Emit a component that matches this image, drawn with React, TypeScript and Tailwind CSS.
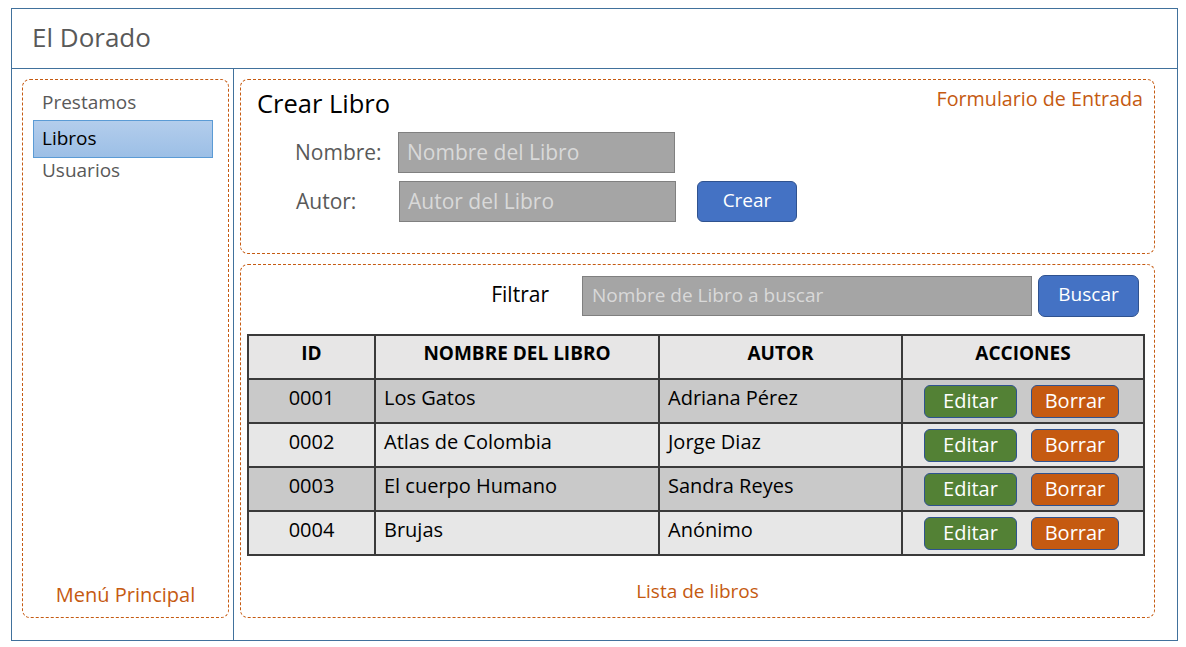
import React from "react";

type Libro = {
  id: string;
  nombre: string;
  autor: string;
};

const libros: Libro[] = [
  { id: "0001", nombre: "Los Gatos", autor: "Adriana Pérez" },
  { id: "0002", nombre: "Atlas de Colombia", autor: "Jorge Diaz" },
  { id: "0003", nombre: "El cuerpo Humano", autor: "Sandra Reyes" },
  { id: "0004", nombre: "Brujas", autor: "Anónimo" },
];

const font = { fontFamily: '"Open Sans", "Noto Sans", sans-serif' };

const Sidebar = () => {
  return (
    <div className="w-[222px] shrink-0 border-r border-[#41719c] pl-[10px] pt-[10px]">
      <div className="flex h-[539px] w-[207px] flex-col rounded-[8px] border border-dashed border-[#c55a11] pt-[7px]">
        <div className="pl-[19px] text-[19px] leading-[30px] text-[#595959]">Prestamos</div>
        <div className="ml-[10px] mt-[3px] h-[38px] w-[180px] border border-[#5b9bd5] bg-gradient-to-b from-[#b3cdec] to-[#9cbfe6] pl-[8px] text-[19px] leading-[34px] text-black">
          Libros
        </div>
        <div className="pl-[19px] text-[19px] leading-[24px] text-[#595959]">Usuarios</div>
        <div className="mt-auto pb-[8px] text-center text-[20px] leading-[28px] text-[#c55a11]">
          Menú Principal
        </div>
      </div>
    </div>
  );
};

const FormCard = () => {
  return (
    <div className="h-[175px] w-[915px] rounded-[8px] border border-dashed border-[#c55a11] pt-[6px]">
      <div className="flex items-start justify-between pl-[16px] pr-[11px]">
        <div className="mt-[1px] text-[25.5px] leading-[32px] text-black">Crear Libro</div>
        <div className="text-[19.7px] leading-[26px] text-[#c55a11]">Formulario de Entrada</div>
      </div>
      <div className="mt-[13px] flex items-center pl-[54px]">
        <div className="w-[103px] text-[21px] text-[#595959]">Nombre:</div>
        <div className="h-[41px] w-[277px] border border-[#808080] bg-[#a5a5a5] pl-[8px] text-[21px] leading-[39px] text-[#d9d9d9]">
          Nombre del Libro
        </div>
      </div>
      <div className="mt-[8px] flex items-center pl-[55px]">
        <div className="w-[103px] text-[21px] text-[#595959]">Autor:</div>
        <div className="h-[41px] w-[277px] border border-[#808080] bg-[#a5a5a5] pl-[8px] text-[21px] leading-[39px] text-[#d9d9d9]">
          Autor del Libro
        </div>
        <button className="ml-[21px] h-[41px] w-[100px] rounded-[6px] border border-[#2f528f] bg-[#4472c4] pb-[3px] text-[19px] text-white">
          Crear
        </button>
      </div>
    </div>
  );
};

const ListCard = () => {
  return (
    <div className="mt-[10px] h-[354px] w-[915px] rounded-[8px] border border-dashed border-[#c55a11] pt-[10px]">
      <div className="flex items-center justify-end pr-[15px]">
        <div className="mr-[33px] pb-[2px] text-[21px] text-black">Filtrar</div>
        <div className="h-[40px] w-[450px] border border-[#808080] bg-[#a5a5a5] pl-[9px] text-[19px] leading-[37px] text-[#d9d9d9]">
          Nombre de Libro a buscar
        </div>
        <button className="ml-[6px] h-[42px] w-[101px] rounded-[7px] border border-[#2f528f] bg-[#4472c4] pb-[3px] text-[19px] text-white">
          Buscar
        </button>
      </div>

      <table className="ml-[6px] mt-[17px] w-[896px] table-fixed border-collapse border-2 border-[#3a3a3a] text-[20px] text-black">
        <colgroup>
          <col className="w-[127px]" />
          <col className="w-[284px]" />
          <col className="w-[243px]" />
          <col className="w-[242px]" />
        </colgroup>
        <thead>
          <tr className="h-[44px] bg-[#e7e6e6]">
            <th className="border-2 border-[#3a3a3a] pb-[7px] text-center text-[19px] font-bold">ID</th>
            <th className="border-2 border-[#3a3a3a] pb-[7px] text-center text-[19px] font-bold">NOMBRE DEL LIBRO</th>
            <th className="border-2 border-[#3a3a3a] pb-[7px] text-center text-[19px] font-bold">AUTOR</th>
            <th className="border-2 border-[#3a3a3a] pb-[7px] text-center text-[19px] font-bold">ACCIONES</th>
          </tr>
        </thead>
        <tbody>
          {libros.map((libro, i) => (
            <tr key={libro.id} className={i % 2 === 0 ? "h-[44px] bg-[#c9c9c9]" : "h-[44px] bg-[#e7e7e7]"}>
              <td className="border-2 border-[#3a3a3a] pb-[7px] text-center">{libro.id}</td>
              <td className="border-2 border-[#3a3a3a] pb-[7px] pl-[8px]">{libro.nombre}</td>
              <td className="border-2 border-[#3a3a3a] pb-[7px] pl-[8px]">{libro.autor}</td>
              <td className="border-2 border-[#3a3a3a] pl-[21px]">
                <div className="flex items-center gap-[14px]">
                  <button className="h-[33px] w-[93px] rounded-[6px] border border-[#2f528f] bg-[#538135] pb-[2px] text-[20px] text-white">
                    Editar
                  </button>
                  <button className="h-[33px] w-[88px] rounded-[6px] border border-[#2f528f] bg-[#c55a11] pb-[2px] text-[20px] text-white">
                    Borrar
                  </button>
                </div>
              </td>
            </tr>
          ))}
        </tbody>
      </table>

      <div className="mt-[22px] text-center text-[19px] leading-[26px] text-[#c55a11]">Lista de libros</div>
    </div>
  );
};

const App = () => {
  return (
    <div className="h-[647px] w-[1186px] bg-white pl-[11px] pt-[8px]" style={font}>
      <div className="flex h-[633px] w-[1167px] flex-col border border-[#41719c]">
        <div className="h-[60px] shrink-0 border-b border-[#41719c] pl-[20px] text-[26px] leading-[56px] text-[#595959]">
          El Dorado
        </div>
        <div className="flex flex-1">
          <Sidebar />
          <div className="pl-[6px] pt-[10px]">
            <FormCard />
            <ListCard />
          </div>
        </div>
      </div>
    </div>
  );
};

export default App;
